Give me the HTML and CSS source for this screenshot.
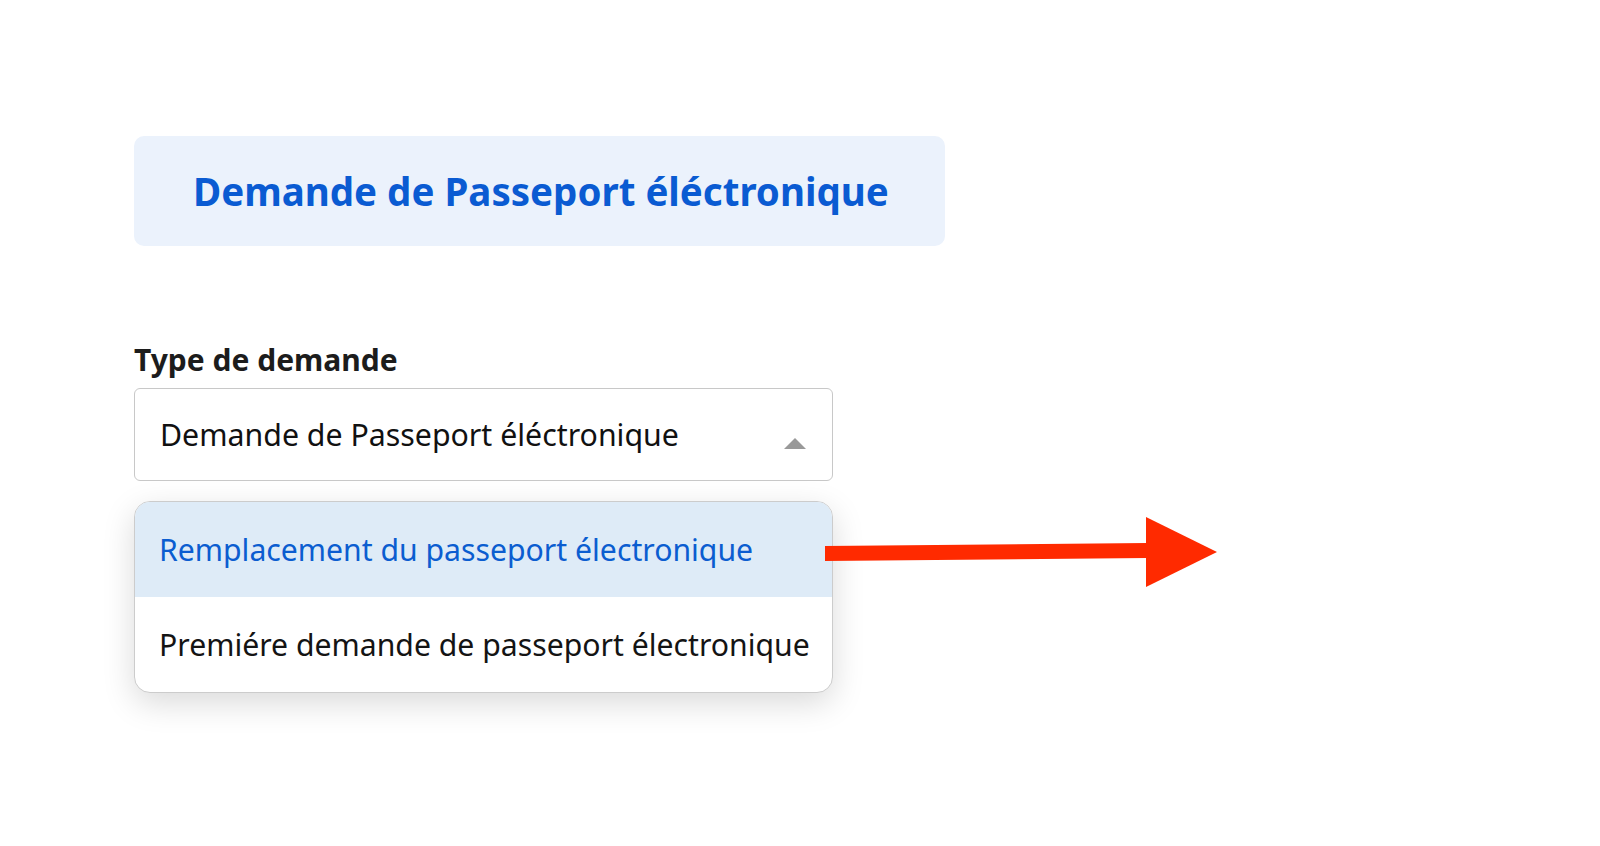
FILE: index.html
```html
<!DOCTYPE html>
<html lang="fr">
<head>
<meta charset="utf-8">
<title>Demande de Passeport éléctronique</title>
<link rel="stylesheet" href="styles.css">
</head>
<body>
<main class="page">
  <div class="banner">
    <h1 class="banner-title">Demande de Passeport éléctronique</h1>
  </div>
  <div class="field">
    <label class="field-label">Type de demande</label>
    <div class="select">
      <span class="select-value">Demande de Passeport éléctronique</span>
      <span class="select-caret"></span>
    </div>
    <ul class="listbox">
      <li class="option option-active">Remplacement du passeport électronique</li>
      <li class="option">Premiére demande de passeport électronique</li>
    </ul>
    <svg class="annotation-arrow" width="400" height="80" viewBox="0 0 400 80" xmlns="http://www.w3.org/2000/svg">
      <polygon points="0,29 322,26 322,41 0,44" fill="#ff2a00"/>
      <polygon points="321,0 392,35 321,70" fill="#ff2a00"/>
    </svg>
  </div>
</main>
</body>
</html>
```

FILE: styles.css
```css
html, body {
  margin: 0;
  padding: 0;
  background: #ffffff;
  height: 100%;
}

body {
  font-family: "Noto Sans", "Open Sans", sans-serif;
  color: #1a1a1a;
}

.page {
  box-sizing: border-box;
  min-height: 100%;
  padding: 136px 0 0 134px;
}

.banner {
  width: 811px;
  height: 110px;
  box-sizing: border-box;
  background: #ebf2fc;
  border-radius: 10px;
  display: flex;
  align-items: center;
  padding-left: 59px;
}

.banner-title {
  margin: 0;
  font-size: 38.5px;
  font-weight: 700;
  color: #0a5bd2;
  letter-spacing: 0;
}

.field {
  position: relative;
  width: 699px;
  margin-top: 96px;
}

.field-label {
  display: block;
  font-size: 30px;
  font-weight: 700;
  color: #1c1c1c;
  line-height: 36px;
  margin-bottom: 10px;
}

.select {
  height: 93px;
  box-sizing: border-box;
  border: 1.5px solid #c8c8c8;
  border-radius: 6px;
  display: flex;
  align-items: center;
  justify-content: space-between;
  padding: 0 26px 0 25px;
}

.select-value {
  font-size: 30.3px;
  color: #111111;
}

.select-caret {
  width: 0;
  height: 0;
  border-left: 11px solid transparent;
  border-right: 11px solid transparent;
  border-bottom: 11px solid #999999;
  margin-top: 18px;
}

.listbox {
  list-style: none;
  margin: 20px 0 0 0;
  padding: 0;
  border: 1.5px solid #cccccc;
  border-radius: 16px;
  overflow: hidden;
  box-shadow: 0 10px 32px rgba(0, 0, 0, 0.15);
  background: #ffffff;
}

.option {
  height: 95px;
  display: flex;
  align-items: center;
  padding-left: 24px;
  font-size: 30.2px;
  color: #141414;
}

.option-active {
  background: #deebf7;
  color: #0b5dd0;
}

.annotation-arrow {
  position: absolute;
  left: 691px;
  top: 175px;
}
```
